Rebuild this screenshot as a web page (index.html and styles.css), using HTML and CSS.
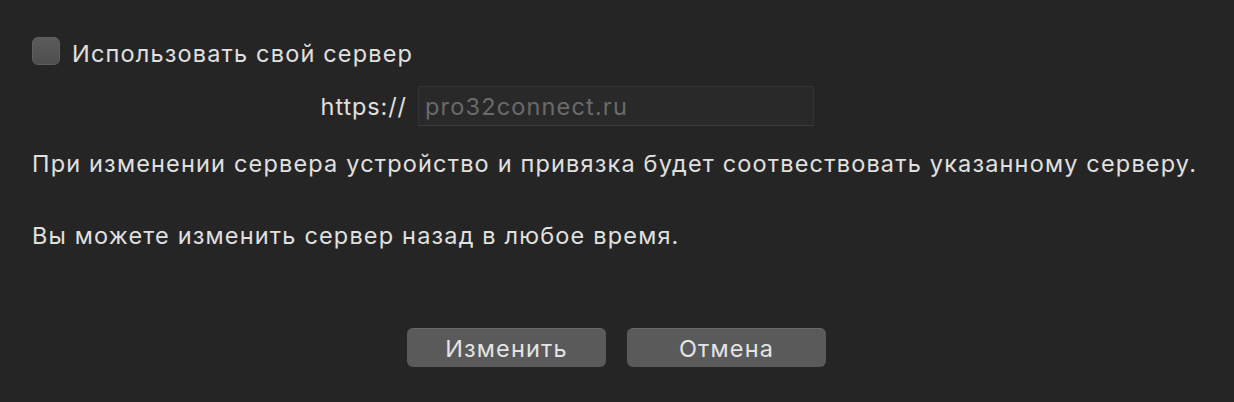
FILE: index.html
```html
<!DOCTYPE html>
<html lang="ru">
<head>
<meta charset="utf-8">
<link rel="stylesheet" href="styles.css">
</head>
<body>
<div class="dialog">
  <label class="check-row">
    <span class="checkbox"></span>
    <span class="check-label">Использовать свой сервер</span>
  </label>
  <div class="url-row">
    <span class="scheme">https://</span>
    <div class="field"><span class="placeholder">pro32connect.ru</span></div>
  </div>
  <p class="text t1">При изменении сервера устройство и привязка будет соотвествовать указанному серверу.</p>
  <p class="text t2">Вы можете изменить сервер назад в любое время.</p>
  <div class="buttons">
    <div class="btn">Изменить</div>
    <div class="btn">Отмена</div>
  </div>
</div>
</body>
</html>
```
FILE: styles.css
```css
html, body {
  margin: 0;
  padding: 0;
  background: #252525;
}
body {
  width: 1234px;
  height: 402px;
  overflow: hidden;
  font-family: Inter, "Liberation Sans", sans-serif;
  color: #e0e0e0;
  letter-spacing: 1.17px;
}
.dialog {
  padding: 37px 0 0 32px;
  display: flex;
  flex-direction: column;
}
.check-row {
  display: flex;
  align-items: center;
  gap: 12px;
  height: 28px;
}
.checkbox {
  width: 28px;
  height: 28px;
  border-radius: 6px;
  background: linear-gradient(#5c5c5c, #4e4e4e);
  box-sizing: border-box;
  border: 1px solid #5e5e5e;
}
.check-label {
  font-size: 23.5px;
  position: relative;
  top: 2px;
}
.url-row {
  display: flex;
  align-items: center;
  margin-top: 21px;
  height: 40px;
  gap: 11px;
}
.scheme {
  width: 375px;
  text-align: right;
  font-size: 23.5px;
  letter-spacing: 0.9px;
}
.field {
  width: 396px;
  height: 40px;
  box-sizing: border-box;
  background: #292929;
  border: 1px solid #333333;
  border-bottom-color: #3a3a3a;
  display: flex;
  align-items: center;
  padding-left: 6px;
}
.placeholder {
  font-size: 23.5px;
  color: #6a6a6a;
}
.text {
  margin: 0;
  font-size: 23.5px;
  line-height: 28px;
}
.t1 { margin-top: 24px; }
.t2 { margin-top: 44px; }
.buttons {
  display: flex;
  gap: 21px;
  margin-top: 78px;
  margin-left: 375px;
}
.btn {
  width: 199px;
  height: 39px;
  box-sizing: border-box;
  border-radius: 6px;
  background: #5a5a5a;
  border-top: 1px solid #686868;
  display: flex;
  align-items: center;
  justify-content: center;
  font-size: 23.5px;
  color: #e4e4e4;
}
```
